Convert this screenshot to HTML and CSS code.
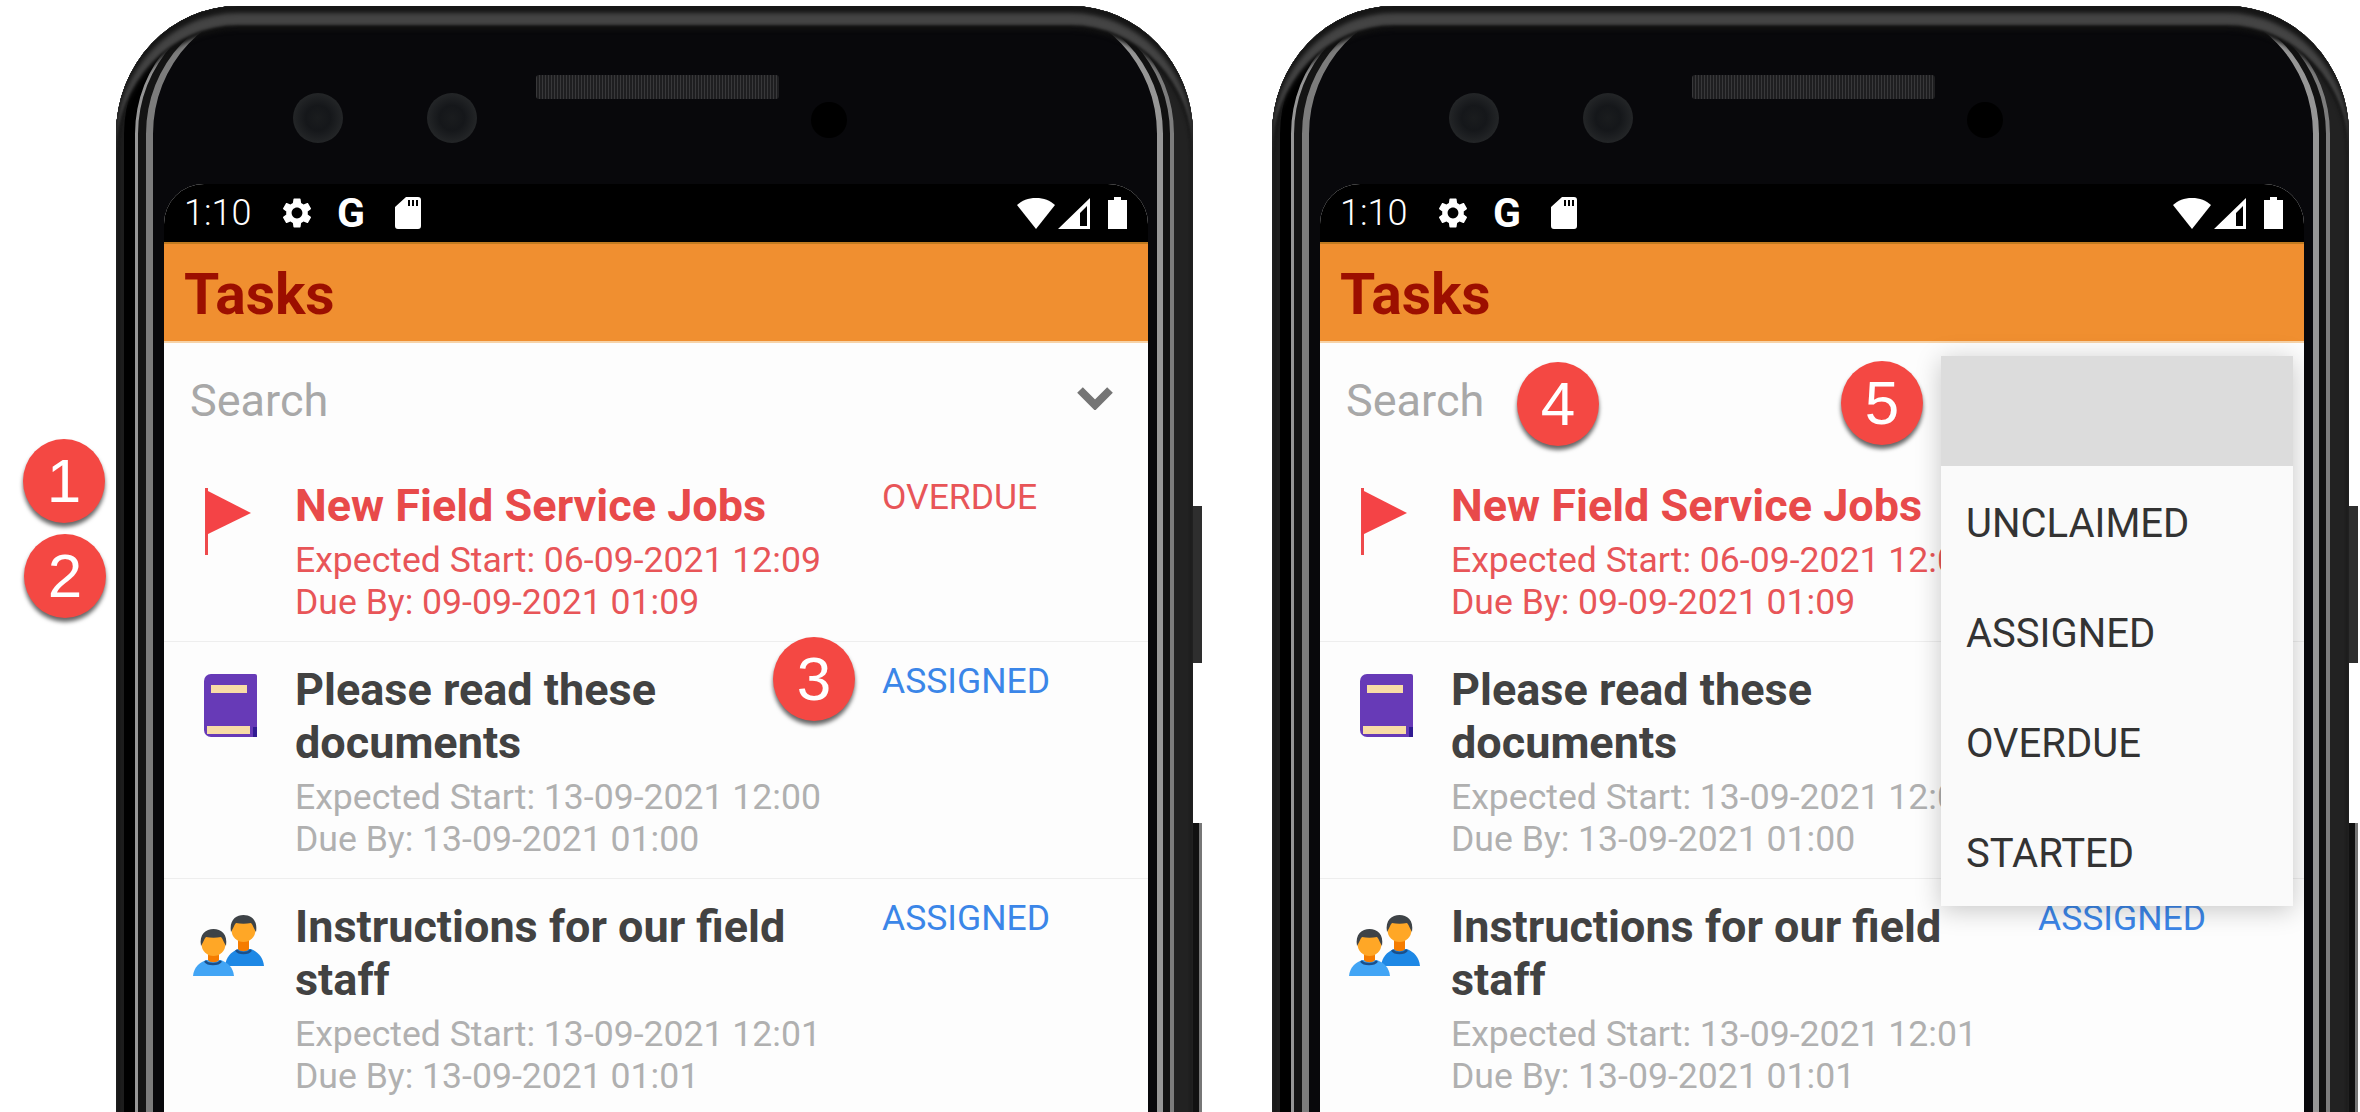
FILE: index.html
```html
<!DOCTYPE html>
<html lang="en">
<head>
    <meta charset="UTF-8">
    <title>Tasks</title>
    <link rel="stylesheet" href="styles.css">
</head>
<body>
<svg class="icon-defs">
    <symbol id="gear" viewBox="0 0 24 24">
        <path fill="#fff" d="M19.14 12.94c.04-.3.06-.61.06-.94 0-.32-.02-.64-.07-.94l2.03-1.58c.18-.14.23-.41.12-.61l-1.92-3.32c-.12-.22-.37-.29-.59-.22l-2.39.96c-.5-.38-1.03-.7-1.62-.94l-.36-2.54c-.04-.24-.24-.41-.48-.41h-3.84c-.24 0-.43.17-.47.41l-.36 2.54c-.59.24-1.13.57-1.62.94l-2.39-.96c-.22-.08-.47 0-.59.22L2.74 8.87c-.12.21-.08.47.12.61l2.03 1.58c-.05.3-.09.63-.09.94s.02.64.07.94l-2.03 1.58c-.18.14-.23.41-.12.61l1.92 3.32c.12.22.37.29.59.22l2.39-.96c.5.38 1.03.7 1.62.94l.36 2.54c.05.24.24.41.48.41h3.84c.24 0 .44-.17.47-.41l.36-2.54c.59-.24 1.13-.56 1.62-.94l2.39.96c.22.08.47 0 .59-.22l1.92-3.32c.12-.22.07-.47-.12-.61l-2.01-1.58zM12 15.6c-1.98 0-3.6-1.62-3.6-3.6s1.62-3.6 3.6-3.6 3.6 1.62 3.6 3.6-1.62 3.6-3.6 3.6z"/>
    </symbol>
    <symbol id="sdcard" viewBox="0 0 26 32">
        <path fill="#fff" fill-rule="evenodd" d="M11 0h12a3 3 0 0 1 3 3v26a3 3 0 0 1-3 3H3a3 3 0 0 1-3-3V10zM13 3v6h2V3zM17 3v6h2V3zM21 3v6h2V3z"/>
    </symbol>
    <symbol id="wifi" viewBox="0 0 38 31">
        <path fill="#fff" d="M19 0C11 0 5 2.500 0 7l19 24L38 7C33 2.500 27 0 19 0z"/>
    </symbol>
    <symbol id="signal" viewBox="0 0 32 31">
        <path fill="#fff" fill-rule="evenodd" d="M32 0v31H0zM29 8l-7 7v13h7z"/>
    </symbol>
    <symbol id="battery" viewBox="0 0 19 32">
        <path fill="#fff" d="M6 0h7v3h6v29H0V3h6z"/>
    </symbol>
    <symbol id="chevron" viewBox="0 0 36 23">
        <path fill="none" stroke="#757575" stroke-width="8" d="M3 3l15 15L33 3"/>
    </symbol>
    <symbol id="flag" viewBox="0 0 72 72">
        <rect x="12" y="0" width="3" height="67" fill="#ee4a4c"/>
        <path fill="#f44346" d="M13 2l45 23-45 22z"/>
    </symbol>
    <symbol id="book" viewBox="0 0 72 72">
        <path fill="#673ab7" d="M18 2h44a2 2 0 0 1 2 2v61H18a7 7 0 0 1-7-7V9a7 7 0 0 1 7-7z"/>
        <rect x="18" y="13" width="36" height="8" fill="#f8dca6"/>
        <rect x="14" y="54" width="43" height="8" fill="#f8dca6"/>
        <rect x="60" y="55" width="4" height="10" fill="#311b92"/>
    </symbol>
    <symbol id="staff" viewBox="0 0 72 72">
        <path fill="#1e88e5" d="M32 57c1-9 6-14 13-17h13c7 3 12 8 13 17z"/>
        <path fill="none" stroke="#1a4f8a" stroke-width="2.500" d="M43 41c3 4 12 4 15 0"/>
        <path fill="#f57c00" d="M45 29h11v11c-2 3-9 3-11 0z"/>
        <circle cx="50.500" cy="21" r="12" fill="#ffa726"/>
        <path fill="#3e4347" d="M38 23C36 11 43 6 50.500 6S65 11 63 23c-2-3-3-7-5-9-5 1-10 1-15 0-2 2-3 6-5 9z"/>
        <path fill="#42a5f5" d="M0 67c1-9 6-13 13-16h15c7 3 12 7 13 16z"/>
        <path fill="none" stroke="#1a4f8a" stroke-width="2.500" d="M12 52c3 4 13 4 16 0"/>
        <path fill="#f57c00" d="M15 42h11v9c-2 3-9 3-11 0z"/>
        <circle cx="20.500" cy="35" r="12" fill="#ffa726"/>
        <path fill="#3e4347" d="M8 37C6 25 13 20 20.500 20S35 25 33 37c-2-3-3-7-5-9-5 1-10 1-15 0-2 2-3 6-5 9z"/>
    </symbol>
</svg>

<div class="phone">
    <div class="side-key volume"></div>
    <div class="side-key power"></div>
    <div class="sensors">
        <span class="camera"></span>
        <span class="camera second"></span>
        <span class="speaker"></span>
        <span class="proximity"></span>
    </div>
    <div class="screen">
        <div class="status-bar">
            <span class="clock">1:10</span>
            <svg class="sb-gear"><use href="#gear"/></svg>
            <span class="sb-g">G</span>
            <svg class="sb-sd"><use href="#sdcard"/></svg>
            <svg class="sb-wifi"><use href="#wifi"/></svg>
            <svg class="sb-signal"><use href="#signal"/></svg>
            <svg class="sb-battery"><use href="#battery"/></svg>
        </div>
        <div class="app-bar">Tasks</div>
        <div class="search-row">
            <span class="search-label">Search</span>
            <svg class="chevron"><use href="#chevron"/></svg>
        </div>
        <div class="task overdue">
            <svg class="task-icon"><use href="#flag"/></svg>
            <div class="task-text">
                <div class="task-title">New Field Service Jobs</div>
                <div class="task-date">Expected Start: 06-09-2021 12:09</div>
                <div class="task-date">Due By: 09-09-2021 01:09</div>
            </div>
            <div class="task-state">OVERDUE</div>
        </div>
        <div class="task">
            <svg class="task-icon"><use href="#book"/></svg>
            <div class="task-text">
                <div class="task-title">Please read these documents</div>
                <div class="task-date">Expected Start: 13-09-2021 12:00</div>
                <div class="task-date">Due By: 13-09-2021 01:00</div>
            </div>
            <div class="task-state">ASSIGNED</div>
        </div>
        <div class="task">
            <svg class="task-icon"><use href="#staff"/></svg>
            <div class="task-text">
                <div class="task-title">Instructions for our field staff</div>
                <div class="task-date">Expected Start: 13-09-2021 12:01</div>
                <div class="task-date">Due By: 13-09-2021 01:01</div>
            </div>
            <div class="task-state">ASSIGNED</div>
        </div>
    </div>
</div>

<div class="phone">
    <div class="side-key volume"></div>
    <div class="side-key power"></div>
    <div class="sensors">
        <span class="camera"></span>
        <span class="camera second"></span>
        <span class="speaker"></span>
        <span class="proximity"></span>
    </div>
    <div class="screen">
        <div class="status-bar">
            <span class="clock">1:10</span>
            <svg class="sb-gear"><use href="#gear"/></svg>
            <span class="sb-g">G</span>
            <svg class="sb-sd"><use href="#sdcard"/></svg>
            <svg class="sb-wifi"><use href="#wifi"/></svg>
            <svg class="sb-signal"><use href="#signal"/></svg>
            <svg class="sb-battery"><use href="#battery"/></svg>
        </div>
        <div class="app-bar">Tasks</div>
        <div class="search-row">
            <span class="search-label">Search</span>
        </div>
        <!-- the states of the first two rows sit under the open menu -->
        <div class="task overdue">
            <svg class="task-icon"><use href="#flag"/></svg>
            <div class="task-text">
                <div class="task-title">New Field Service Jobs</div>
                <div class="task-date">Expected Start: 06-09-2021 12:09</div>
                <div class="task-date">Due By: 09-09-2021 01:09</div>
            </div>
        </div>
        <div class="task">
            <svg class="task-icon"><use href="#book"/></svg>
            <div class="task-text">
                <div class="task-title">Please read these documents</div>
                <div class="task-date">Expected Start: 13-09-2021 12:00</div>
                <div class="task-date">Due By: 13-09-2021 01:00</div>
            </div>
        </div>
        <div class="task">
            <svg class="task-icon"><use href="#staff"/></svg>
            <div class="task-text">
                <div class="task-title">Instructions for our field staff</div>
                <div class="task-date">Expected Start: 13-09-2021 12:01</div>
                <div class="task-date">Due By: 13-09-2021 01:01</div>
            </div>
            <div class="task-state">ASSIGNED</div>
        </div>
        <div class="filter-menu">
            <div class="filter-item selected"></div>
            <div class="filter-item">UNCLAIMED</div>
            <div class="filter-item">ASSIGNED</div>
            <div class="filter-item">OVERDUE</div>
            <div class="filter-item">STARTED</div>
        </div>
    </div>
</div>

<div class="badge badge-1">1</div>
<div class="badge badge-2">2</div>
<div class="badge badge-3">3</div>
<div class="badge badge-4">4</div>
<div class="badge badge-5">5</div>
</body>
</html>
```
FILE: styles.css
```css
html, body {
    height: 100%;
}

body {
    margin: 0;
    padding: 6px 0 0 116px;
    box-sizing: border-box;
    display: flex;
    gap: 79px;
    align-items: flex-start;
    position: relative;
    overflow: hidden;
    background-color: #fff;
    font-family: Roboto, "Liberation Sans", sans-serif;
}

.icon-defs {
    display: none;
}

/* phone shell */
.phone {
    position: relative;
    flex: none;
    width: 984px;
    height: 1037px;
    padding: 69px 45px 0 48px;
    border-radius: 122px 122px 0 0 / 128px 128px 0 0;
    background-color: #08080b;
    box-shadow:
        inset 0 7px 4px #161616,
        inset 0 19px 3px #444,
        inset 0 24px 4px #111,
        inset 8px 0 0 #1c1c1c,
        inset 19px 0 0 #000,
        inset 22px 0 0 #969696,
        inset 30px 0 0 #141414,
        inset 37px 0 0 #7c7c7c,
        inset -19px 0 0 #222,
        inset -23px 0 0 #7c7c7c,
        inset -30px 0 0 #111,
        inset -36px 0 0 #969696;
}

.side-key {
    position: absolute;
    left: 100%;
    width: 9px;
    box-sizing: border-box;
}

.volume {
    top: 500px;
    height: 157px;
    background-color: #2e2e2e;
}

.power {
    top: 817px;
    height: 289px;
    background-color: #111;
    border-right: 3px solid #777;
}

.sensors {
    display: flex;
    align-items: flex-start;
    height: 109px;
    padding-left: 129px;
}

.camera {
    width: 50px;
    height: 50px;
    margin-top: 18px;
    border-radius: 50%;
    background: radial-gradient(circle, #1a1c1e 0, #15171a 35%, #232527 70%, #1a1b1d 100%);
}

.camera.second {
    margin-left: 84px;
}

.speaker {
    width: 243px;
    height: 24px;
    margin-left: 59px;
    border-radius: 3px;
    background-color: #1e1e20;
    background-image: repeating-linear-gradient(90deg, #38383a 0 1px, transparent 1px 3px);
}

.proximity {
    width: 36px;
    height: 36px;
    margin: 27px 0 0 32px;
    border-radius: 50%;
    background-color: #000;
}

/* screen */
.screen {
    position: relative;
    height: 928px;
    overflow: hidden;
    border-radius: 40px 40px 0 0;
    background-color: #fdfdfd;
}

.status-bar {
    display: flex;
    align-items: center;
    height: 58px;
    padding: 0 21px 0 20px;
    background-color: #000;
    color: #fff;
}

.clock {
    width: 68px;
    font-size: 36px;
    font-weight: 300;
}

.sb-gear {
    width: 36px;
    height: 36px;
    margin-left: 27px;
}

.sb-g {
    width: 32px;
    margin-left: 22px;
    font-size: 41px;
    font-weight: 700;
}

.sb-sd {
    width: 26px;
    height: 32px;
    margin-left: 26px;
}

.sb-wifi {
    width: 38px;
    height: 31px;
    margin-left: auto;
}

.sb-signal {
    width: 32px;
    height: 31px;
    margin-left: 3px;
}

.sb-battery {
    width: 19px;
    height: 32px;
    margin-left: 18px;
}

.app-bar {
    height: 101px;
    box-sizing: border-box;
    overflow: hidden;
    padding-left: 20px;
    border-top: 2px solid #c07a20;
    border-bottom: 2px solid #f7d3a8;
    background-color: #f08f30;
    color: #9c0f00;
    font-size: 57px;
    font-weight: 700;
    line-height: 102px;
}

.search-row {
    display: flex;
    align-items: center;
    justify-content: space-between;
    height: 115px;
    padding: 0 35px 0 26px;
}

.search-label {
    color: #a8a8a8;
    font-size: 45px;
}

.chevron {
    width: 36px;
    height: 23px;
    margin-bottom: 4px;
}

/* task rows */
.task {
    display: flex;
    align-items: flex-start;
    padding: 22px 0 18px;
    border-bottom: 1px solid #eeeeee;
}

.task-icon {
    flex: none;
    width: 72px;
    height: 72px;
    margin: 8px 0 0 29px;
}

.task-text {
    flex: none;
    width: 575px;
    margin-left: 30px;
}

.task-title {
    margin: -1px 0 7px;
    color: #424242;
    font-size: 45px;
    font-weight: 700;
    line-height: 53px;
}

.task-date {
    color: #b0b0b0;
    font-size: 35.600px;
    line-height: 42px;
}

.task-state {
    margin: -4px 0 0 12px;
    color: #3b86e8;
    font-size: 35.500px;
    line-height: 42px;
}

.overdue .task-title {
    color: #e84a4a;
}

.overdue .task-date,
.overdue .task-state {
    color: #e85558;
}

/* status filter dropdown */
.filter-menu {
    position: absolute;
    top: 172px;
    right: 11px;
    width: 352px;
    background-color: #fafafa;
    box-shadow: 0 4px 24px rgba(0, 0, 0, 0.22);
}

.filter-item {
    height: 110px;
    box-sizing: border-box;
    overflow: hidden;
    padding-left: 25px;
    color: #333;
    font-size: 40px;
    line-height: 115px;
}

.filter-item.selected {
    background-color: #dcdcdc;
}

/* numbered callouts */
.badge {
    position: absolute;
    width: 82px;
    height: 84px;
    border-radius: 50%;
    background-color: #f44843;
    box-shadow: 0 4px 4px rgba(0, 0, 0, 0.6);
    color: #fff;
    font-family: "Liberation Sans", Arial, sans-serif;
    font-size: 62px;
    line-height: 84px;
    text-align: center;
}

.badge-1 { left: 23px; top: 439px; }
.badge-2 { left: 24px; top: 534px; }
.badge-3 { left: 773px; top: 637px; }
.badge-4 { left: 1517px; top: 362px; }
.badge-5 { left: 1841px; top: 361px; }
```
